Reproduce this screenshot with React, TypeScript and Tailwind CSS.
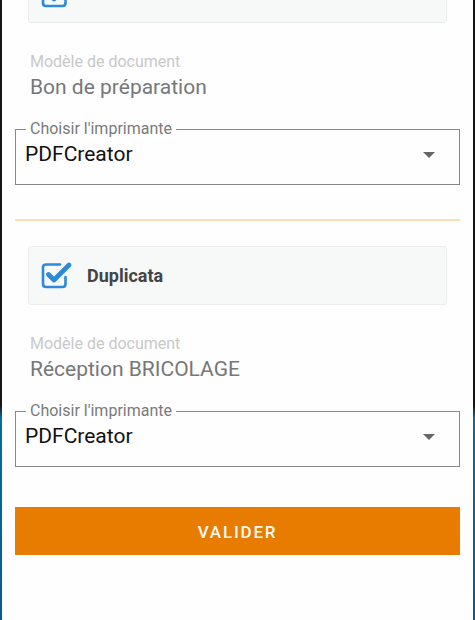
import type { ReactNode } from 'react'

const FONT = "font-['Roboto','Liberation_Sans',sans-serif]"

function CheckIcon() {
  return (
    <svg width="31" height="27" viewBox="0 0 31 27" className="shrink-0">
      {/* box outline, open at top right where the tick passes */}
      <path
        d="M19 2.5 H5 Q2 2.5 2 5.5 V22 Q2 25 5 25 H21.5 Q24.5 25 24.5 22 V15"
        fill="none"
        stroke="#2b8ad9"
        strokeWidth="2.6"
        strokeLinecap="round"
      />
      <path
        d="M7.5 12.5 L13 18 L28 3"
        fill="none"
        stroke="#2b8ad9"
        strokeWidth="4.6"
        strokeLinecap="round"
        strokeLinejoin="round"
      />
    </svg>
  )
}

function OptionCard({ label, className = '' }: { label: string; className?: string }) {
  return (
    <div
      className={`mx-[13px] flex items-center gap-[15px] rounded-[3px] border border-[#ececec] bg-[#f7f8f8] pl-[12px] ${className}`}
    >
      <CheckIcon />
      <span className="text-[18px] font-bold leading-none text-[#444]">{label}</span>
    </div>
  )
}

function DocModel({ value }: { value: string }) {
  return (
    <div className="mt-[29px] pl-[15px]">
      <div className="text-[16px] leading-[19px] text-[#c9c9c9]">Modèle de document</div>
      <div className="mt-[4px] text-[21px] leading-[25px] text-[#777]">{value}</div>
    </div>
  )
}

function PrinterSelect({ value }: { value: string }) {
  return (
    <div className="relative mt-[29px] h-[56px] border-[1.5px] border-[#888]">
      {/* floating label over the border */}
      <span className="absolute -top-[11px] left-[10px] bg-white px-[4px] text-[16px] leading-[19px] text-[#7a7a7a]">
        Choisir l'imprimante
      </span>
      <div className="flex items-center justify-between pl-[9px] pr-[24px] pt-[12px]">
        <span className="text-[21px] leading-[25px] text-[#111]">{value}</span>
        <svg width="12" height="6" viewBox="0 0 12 6">
          <path d="M0 0 H12 L6 6 Z" fill="#666" />
        </svg>
      </div>
    </div>
  )
}

function Frame({ children }: { children: ReactNode }) {
  return (
    <div className="h-[620px] w-[475px] overflow-hidden bg-[linear-gradient(#141414_0,#141414_405px,#0c6b93_418px,#0a5c82_100%)] px-[2px]">
      <div className="h-full overflow-hidden bg-[#fefefe] px-[13px]">{children}</div>
    </div>
  )
}

export default function App() {
  return (
    <div className={FONT}>
      <Frame>
        <div className="-mt-[35px] flex flex-col">
          {/* Edition */}
          <OptionCard label="Edition" className="h-[58px]" />
          <DocModel value="Bon de préparation" />
          <PrinterSelect value="PDFCreator" />

          <div className="mt-[34px] h-[2px] bg-[#fbe0b6]" />

          {/* Duplicata */}
          <OptionCard label="Duplicata" className="mt-[25px] h-[59px]" />
          <DocModel value="Réception BRICOLAGE" />
          <PrinterSelect value="PDFCreator" />

          <button className="mt-[40px] flex h-[48px] items-center justify-center bg-[#e87c00] pt-[3px] text-[17px] font-medium tracking-[1.8px] text-[#fffaf0]">
            VALIDER
          </button>
        </div>
      </Frame>
    </div>
  )
}
